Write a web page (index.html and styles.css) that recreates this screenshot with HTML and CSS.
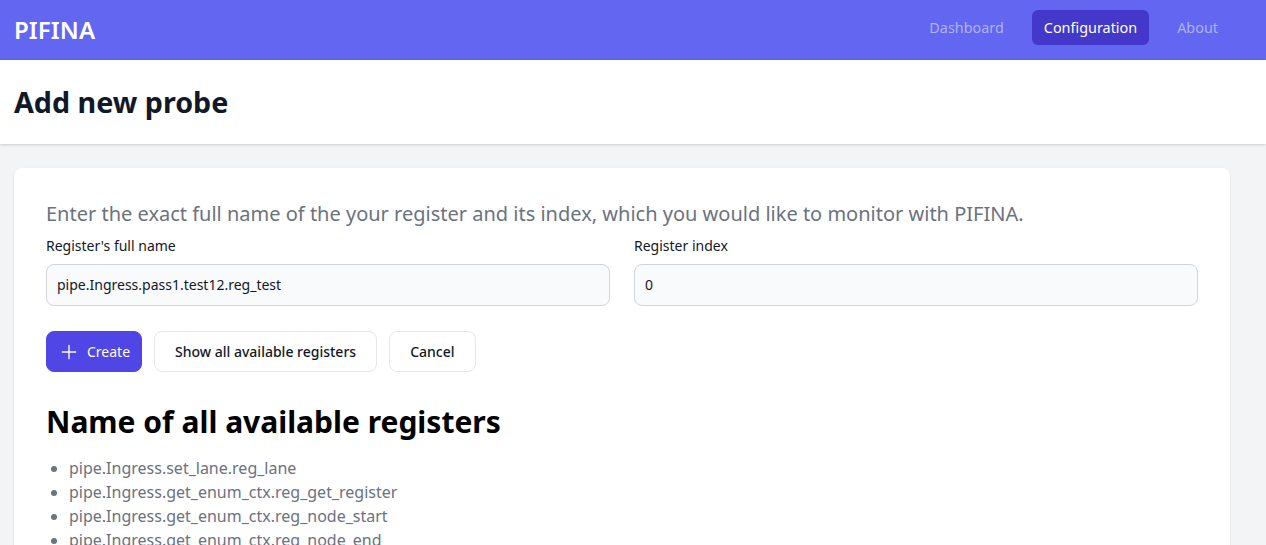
FILE: index.html
```html
<!DOCTYPE html>
<html lang="en">
<head>
<meta charset="utf-8">
<title>PIFINA - Add new probe</title>
<link rel="stylesheet" href="styles.css">
</head>
<body>
<nav class="navbar">
  <div class="brand">PIFINA</div>
  <div class="nav-links">
    <a class="nav-link">Dashboard</a>
    <a class="nav-link active">Configuration</a>
    <a class="nav-link">About</a>
  </div>
</nav>
<header class="page-header">
  <h1>Add new probe</h1>
</header>
<main class="main">
  <section class="card">
    <p class="intro">Enter the exact full name of the your register and its index, which you would like to monitor with PIFINA.</p>
    <div class="fields">
      <div class="field">
        <label class="label">Register's full name</label>
        <div class="input">pipe.Ingress.pass1.test12.reg_test</div>
      </div>
      <div class="field">
        <label class="label">Register index</label>
        <div class="input">0</div>
      </div>
    </div>
    <div class="actions">
      <button class="btn btn-primary"><svg class="icon" viewBox="0 0 24 24" fill="none" stroke="currentColor" stroke-width="1.6" stroke-linecap="round"><path d="M12 4v16M20 12H4"/></svg>Create</button>
      <button class="btn">Show all available registers</button>
      <button class="btn">Cancel</button>
    </div>
    <h2 class="list-title">Name of all available registers</h2>
    <ul class="reg-list">
      <li>pipe.Ingress.set_lane.reg_lane</li>
      <li>pipe.Ingress.get_enum_ctx.reg_get_register</li>
      <li>pipe.Ingress.get_enum_ctx.reg_node_start</li>
      <li>pipe.Ingress.get_enum_ctx.reg_node_end</li>
    </ul>
  </section>
</main>
</body>
</html>
```
FILE: styles.css
```css
* { box-sizing: border-box; }
html, body { margin: 0; padding: 0; }
body {
  font-family: "Noto Sans", "Open Sans", sans-serif;
  background: #f3f4f6;
  color: #111827;
  overflow: hidden;
}
.navbar {
  height: 60px;
  background: #6366f1;
  display: flex;
  align-items: center;
  justify-content: space-between;
  padding: 0 36px 0 14px;
}
.brand {
  color: #ffffff;
  font-size: 24px;
  line-height: 32px;
  font-weight: 600;
  letter-spacing: 0.1px;
}
.nav-links {
  display: flex;
  gap: 16px;
  align-self: flex-start;
  padding-top: 10px;
}
.nav-link {
  font-size: 14.4px;
  line-height: 19px;
  padding: 8px 12px;
  border-radius: 6px;
  color: #adb3fb;
}
.nav-link.active {
  background: #4338ca;
  color: #ffffff;
}
.page-header {
  background: #ffffff;
  padding: 24px 14px;
  box-shadow: 0 1px 3px rgba(0,0,0,0.1), 0 1px 2px rgba(0,0,0,0.06);
  position: relative;
}
.page-header h1 {
  margin: 0;
  font-size: 28.7px;
  line-height: 36px;
  font-weight: 700;
  color: #111827;
}
.main {
  padding: 24px 36px 0 14px;
}
.card {
  background: #ffffff;
  border-radius: 8px;
  box-shadow: 0 1px 3px rgba(0,0,0,0.08), 0 1px 2px rgba(0,0,0,0.04);
  padding: 32px;
  min-height: 400px;
}
.intro {
  margin: 0 0 8px;
  font-size: 20px;
  line-height: 28px;
  color: #6b7280;
}
.fields {
  display: grid;
  grid-template-columns: 1fr 1fr;
  gap: 24px;
}
.field {
  display: flex;
  flex-direction: column;
  gap: 8px;
}
.label {
  font-size: 14px;
  line-height: 20px;
  color: #111827;
}
.input {
  height: 42px;
  padding: 10px;
  font-size: 14px;
  line-height: 20px;
  background: #f9fafb;
  border: 1px solid #d1d5db;
  border-radius: 8px;
  color: #111827;
}
.actions {
  display: flex;
  gap: 12px;
  margin-top: 25px;
}
.btn {
  font-family: inherit;
  font-size: 14px;
  line-height: 20px;
  font-weight: 500;
  height: 41px;
  padding: 0 20px;
  background: #ffffff;
  color: #111827;
  border: 1px solid #e5e7eb;
  border-radius: 8px;
  display: flex;
  align-items: center;
  gap: 8px;
}
.btn-primary {
  background: #4f46e5;
  border-color: #4f46e5;
  color: #ffffff;
  padding: 0 11px 0 12px;
  font-weight: 400;
}
.icon {
  width: 20px;
  height: 20px;
}
.list-title {
  margin: 32px 0 16px;
  font-size: 30px;
  line-height: 36px;
  font-weight: 700;
  color: #000000;
}
.reg-list {
  margin: 0;
  padding-left: 23px;
  font-size: 16px;
  line-height: 24px;
  color: #6b7280;
}
```
